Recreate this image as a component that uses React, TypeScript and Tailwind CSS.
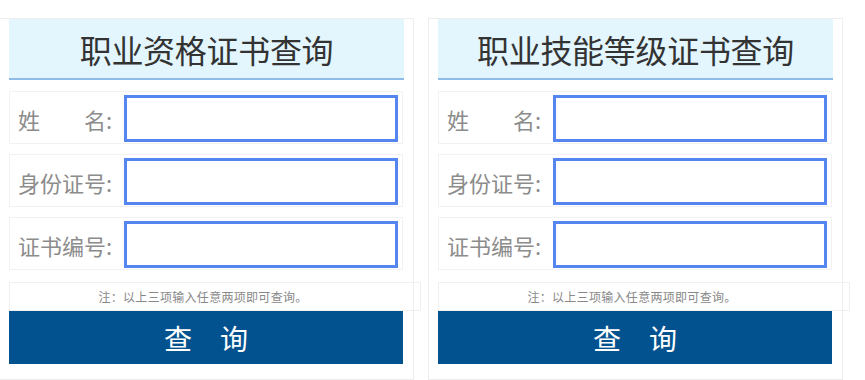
const FONT = "font-['Microsoft_YaHei','Noto_Sans_CJK_SC',sans-serif]";

const fields = [
  { id: "name", label: "姓\u3000\u3000名:" },
  { id: "idcard", label: "身份证号:" },
  { id: "certno", label: "证书编号:" },
];

function QueryCard({ title }: { title: string }) {
  return (
    <div className="w-[415px] h-[362px] shrink-0 border border-[#eeeeee] pl-[9px] pr-[9px] flex flex-col">
      <div className="h-[61px] w-full bg-[#e3f6fe] border-b-2 border-[#8fbbe8] flex items-center justify-center">
        <h2 className="text-[32px] leading-none text-[#333333] tracking-[-0.3px]">{title}</h2>
      </div>
      <div className="flex flex-col gap-[10px] mt-[11px]">
        {fields.map((f) => (
          <div
            key={f.id}
            className="w-[394px] h-[53px] border border-[#f2f2f2] flex items-start pt-[3px]"
          >
            <label className="w-[114px] h-[47px] pl-[8px] flex items-center text-[22px] text-[#8c8c8c] leading-none">
              {f.label}
            </label>
            <input
              type="text"
              className="w-[274px] h-[47px] border-[3px] border-[#5585f0] bg-white outline-none"
            />
          </div>
        ))}
      </div>
      <div className="mt-[12px] w-[412px] h-[29px] border border-[#f0f0f0] pr-[24px] flex items-center justify-center text-[12px] tracking-[0.3px] text-[#888888]">
        注：以上三项输入任意两项即可查询。
      </div>
      <button className="w-[394px] h-[53px] bg-[#02528f] text-white text-[28px] leading-none flex items-center justify-center">
        查{"\u3000"}询
      </button>
    </div>
  );
}

export default function App() {
  return (
    <div className={`w-[865px] h-[380px] bg-white pt-[18px] overflow-hidden ${FONT}`}>
      <div className="flex gap-[14px] -ml-px">
        <QueryCard title="职业资格证书查询" />
        <QueryCard title="职业技能等级证书查询" />
      </div>
    </div>
  );
}
